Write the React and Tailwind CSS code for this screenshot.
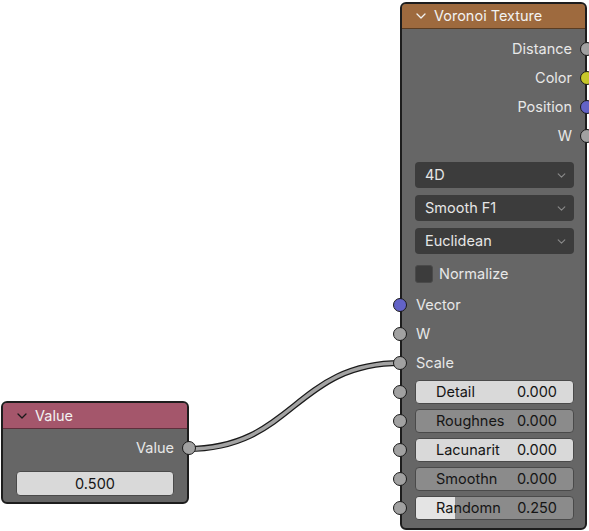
import React from 'react';

const font = { fontFamily: 'Inter, "Noto Sans", sans-serif' };

const socketColors = {
  gray: 'bg-[#a1a1a1]',
  yellow: 'bg-[#c7c729]',
  purple: 'bg-[#6363c7]',
};

function Socket({ side, color = 'gray' }) {
  const pos = side === 'left' ? '-left-[9px]' : '-right-[9px]';
  return (
    <span
      className={`absolute ${pos} top-1/2 -translate-y-1/2 w-[14px] h-[14px] rounded-full border-[1.5px] border-[#1a1a1a] ${socketColors[color]} z-10`}
    />
  );
}

function Chevron({ className = '', w = 10, h = 6 }) {
  return (
    <svg className={className} width={w} height={h} viewBox="0 0 10 6" fill="none">
      <path d="M1 1 L5 5 L9 1" stroke="currentColor" strokeWidth="1.3" strokeLinecap="round" strokeLinejoin="round" />
    </svg>
  );
}

function OutputRow({ label, color }) {
  return (
    <div className="relative h-[29px] flex items-center justify-end pr-[13px] text-[14.5px] text-[#e8e8e8]">
      {label}
      <Socket side="right" color={color} />
    </div>
  );
}

function InputRow({ label, color }) {
  return (
    <div className="relative h-[29px] flex items-center pl-[14px] text-[14.5px] text-[#e8e8e8]">
      {label}
      <Socket side="left" color={color} />
    </div>
  );
}

function Dropdown({ label }) {
  return (
    <div className="ml-[13px] mr-[11px] h-[26px] rounded-[4px] bg-[#3c3c3c] flex items-center justify-between pl-[10px] pr-[8px] text-[14.5px] text-[#e6e6e6]">
      <span>{label}</span>
      <Chevron className="text-[#8a8a8a]" w={9} h={5} />
    </div>
  );
}

function FieldRow({ label, value, light, fill }) {
  return (
    <div className="relative h-[29px] flex items-center">
      <Socket side="left" />
      <div
        className={`relative ml-[13px] mr-[11px] flex-1 h-[24px] rounded-[4px] border border-[#4a4a4a] overflow-hidden ${light ? 'bg-[#d9d9d9]' : 'bg-[#8b8b8b]'}`}
      >
        {fill && <div className="absolute left-0 top-0 bottom-0 bg-[#e4e4e4]" style={{ width: fill }} />}
        <div className="relative h-full flex items-center justify-between pl-[20px] pr-[16px] text-[14.5px] text-[#151515]">
          <span>{label}</span>
          <span>{value}</span>
        </div>
      </div>
    </div>
  );
}

export default function App() {
  return (
    <div className="relative w-[589px] h-[531px] bg-white overflow-hidden" style={font}>
      {/* link */}
      <svg className="absolute inset-0 pointer-events-none" width="589" height="531">
        <path d="M187 449 C 294 449, 294 363, 401 363" fill="none" stroke="#1a1a1a" strokeWidth="6" />
        <path d="M187 449 C 294 449, 294 363, 401 363" fill="none" stroke="#a3a3a3" strokeWidth="3.5" />
      </svg>

      {/* Voronoi Texture node */}
      <div className="absolute left-[400px] top-[2px] w-[187px] h-[528px] rounded-[6px] border-2 border-[#1d1d1d] bg-[#666666] flex flex-col">
        <div className="h-[25px] shrink-0 rounded-t-[4px] bg-[#9e6a3e] border-b border-[#5a3c22] flex items-center pl-[14px] gap-[8px] text-[14.5px] text-[#f2f2f2]">
          <Chevron className="text-[#f2f2f2]" />
          <span>Voronoi Texture</span>
        </div>
        <div className="pt-[5px] flex flex-col">
          <OutputRow label="Distance" />
          <OutputRow label="Color" color="yellow" />
          <OutputRow label="Position" color="purple" />
          <OutputRow label="W" />

          <div className="mt-[12px] flex flex-col gap-[7px]">
            <Dropdown label="4D" />
            <Dropdown label="Smooth F1" />
            <Dropdown label="Euclidean" />
          </div>

          <div className="mt-[10px] h-[20px] flex items-center gap-[6px] pl-[13px] text-[14.5px] text-[#e8e8e8]">
            <span className="w-[18px] h-[18px] rounded-[3px] bg-[#3c3c3c] border border-[#4a4a4a]" />
            <span>Normalize</span>
          </div>

          <div className="mt-[6px]">
            <InputRow label="Vector" color="purple" />
            <InputRow label="W" />
            <InputRow label="Scale" />
          </div>

          <FieldRow label="Detail" value="0.000" light />
          <FieldRow label="Roughnes" value="0.000" />
          <FieldRow label="Lacunarit" value="0.000" light />
          <FieldRow label="Smoothn" value="0.000" />
          <FieldRow label="Randomn" value="0.250" fill="25%" />
        </div>
      </div>

      {/* Value node */}
      <div className="absolute left-[1px] top-[401px] w-[188px] h-[103px] rounded-[6px] border-2 border-[#1d1d1d] bg-[#666666] flex flex-col">
        <div className="h-[26px] shrink-0 rounded-t-[4px] bg-[#a4566b] border-b border-[#5e2f3c] flex items-center pl-[14px] gap-[8px] text-[14.5px] text-[#f2f2f2]">
          <Chevron className="text-[#1a1a1a]" />
          <span>Value</span>
        </div>
        <div className="pt-[4px]">
          <OutputRow label="Value" />
          <div className="mx-[13px] mt-[9px] h-[25px] rounded-[4px] border border-[#4a4a4a] bg-[#d9d9d9] flex items-center justify-center text-[14.5px] text-[#151515]">
            0.500
          </div>
        </div>
      </div>
    </div>
  );
}
